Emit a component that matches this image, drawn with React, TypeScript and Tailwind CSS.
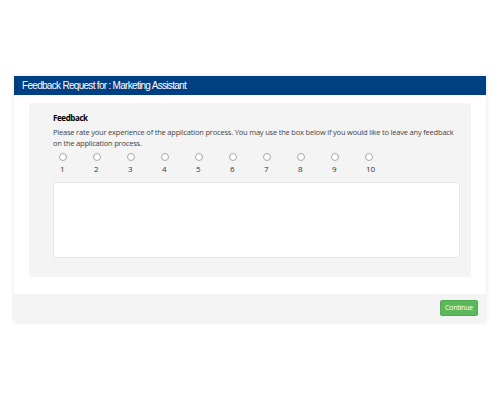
export default function App() {
  const ratings = [1, 2, 3, 4, 5, 6, 7, 8, 9, 10];

  return (
    <div className="w-[500px] h-[400px] bg-white pt-[76px] px-[14px]">
      <div className="bg-white shadow-[0_0_4px_rgba(0,0,0,0.12)]">
        <div className="h-[19px] bg-[#003f82] flex items-center pl-[8px] text-white text-[10px] tracking-[-0.7px] font-['Liberation_Sans',Arial,sans-serif]">
          Feedback Request for : Marketing Assistant
        </div>

        <div className="px-[15px] pt-[8px] pb-[17px]">
          <div className="bg-[#f4f4f4] rounded-[3px] pl-[24px] pr-[11px] pt-[9px] pb-[19px] font-['Open_Sans',sans-serif] text-[#333]">
            <div className="text-[8px] font-bold leading-[12px] tracking-[-0.4px] text-black">Feedback</div>
            <p className="mt-[3px] text-[7.5px] leading-[11px] tracking-[-0.2px] text-[#444]">
              Please rate your experience of the application process. You may use the box below if you would like to leave any feedback on the application process.
            </p>
            <div className="flex mt-[4px]">
              {ratings.map((n) => (
                <label key={n} className="w-[34px] flex flex-col items-start">
                  <span className="ml-[6px] w-[8px] h-[8px] rounded-full border border-[#aaa] bg-white" />
                  <span className="mt-[3px] ml-[7px] text-[8px] leading-[10px] text-[#333]">{n}</span>
                </label>
              ))}
            </div>
            <textarea className="mt-[8px] block w-full h-[76px] bg-white border border-[#e6e6e6] rounded-[2px] resize-none outline-none" />
          </div>
        </div>

        <div className="h-[28px] bg-[#f4f4f4] flex items-center justify-end pr-[8px]">
          <button className="h-[16px] px-[4px] bg-[#5cb85c] border border-[#4cae4c] rounded-[2px] text-white text-[7px] tracking-[-0.2px] font-['Open_Sans',sans-serif]">
            Continue
          </button>
        </div>
      </div>
    </div>
  );
}
